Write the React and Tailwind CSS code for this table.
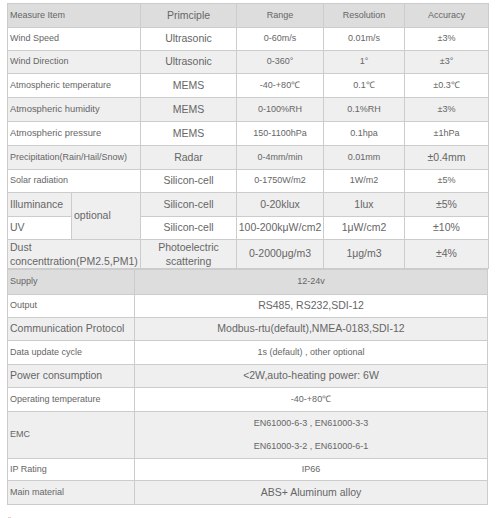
const S = "text-[9px]";
const M = "text-[9.4px]";
const L = "text-[10.5px]";

const rows = [
  { bg: "bg-white", h: "h-[23px]", name: ["Wind Speed", S], cells: [["Ultrasonic", L], ["0-60m/s", S], ["0.01m/s", S], ["±3%", S]] },
  { bg: "bg-[#efefef]", h: "h-[23px]", name: ["Wind Direction", S], cells: [["Ultrasonic", L], ["0-360°", S], ["1°", S], ["±3°", S]] },
  { bg: "bg-white", h: "h-[24px]", name: ["Atmospheric temperature", S], cells: [["MEMS", L], ["-40-+80℃", S], ["0.1℃", S], ["±0.3℃", S]] },
  { bg: "bg-[#efefef]", h: "h-[24px]", name: ["Atmospheric humidity", M], cells: [["MEMS", L], ["0-100%RH", S], ["0.1%RH", S], ["±3%", S]] },
  { bg: "bg-white", h: "h-[24px]", name: ["Atmospheric pressure", M], cells: [["MEMS", L], ["150-1100hPa", S], ["0.1hpa", S], ["±1hPa", S]] },
  { bg: "bg-[#efefef]", h: "h-[24px]", name: ["Precipitation(Rain/Hail/Snow)", S], cells: [["Radar", L], ["0-4mm/min", S], ["0.01mm", S], ["±0.4mm", L]] },
  { bg: "bg-white", h: "h-[23px]", name: ["Solar radiation", S], cells: [["Silicon-cell", L], ["0-1750W/m2", S], ["1W/m2", S], ["±5%", S]] },
];

const specs = [
  { bg: "bg-[#dddddd]", h: "h-[25px]", name: ["Supply", S], value: [["12-24v", S]] },
  { bg: "bg-white", h: "h-[23px]", name: ["Output", S], value: [["RS485, RS232,SDI-12", L]] },
  { bg: "bg-[#efefef]", h: "h-[23px]", name: ["Communication Protocol", L], value: [["Modbus-rtu(default),NMEA-0183,SDI-12", L]] },
  { bg: "bg-white", h: "h-[24px]", name: ["Data update cycle", S], value: [["1s (default) , other optional", S]] },
  { bg: "bg-[#efefef]", h: "h-[23px]", name: ["Power consumption", L], value: [["<2W,auto-heating power: 6W", L]] },
  { bg: "bg-white", h: "h-[24px]", name: ["Operating temperature", S], value: [["-40-+80℃", S]] },
  { bg: "bg-[#efefef]", h: "h-[46px]", name: ["EMC", S], value: [["EN61000-6-3 , EN61000-3-3", S], ["EN61000-3-2 , EN61000-6-1", S]] },
  { bg: "bg-white", h: "h-[22px]", name: ["IP Rating", S], value: [["IP66", S]] },
  { bg: "bg-[#efefef]", h: "h-[24px]", name: ["Main material", S], value: [["ABS+ Aluminum alloy", L]] },
];

const td = "border border-[#cccccc] p-0";

function App() {
  return (
    <div className="min-h-screen bg-white pt-[3px] pl-[7px] text-[#666666]" style={{ fontFamily: '"Liberation Sans", Arial, sans-serif' }}>
      <table className="w-[481px] table-fixed border-collapse">
        <colgroup>
          <col className="w-[64px]" />
          <col className="w-[69px]" />
          <col className="w-[96px]" />
          <col className="w-[87px]" />
          <col className="w-[81px]" />
          <col className="w-[84px]" />
        </colgroup>
        <tbody>
          <tr className="h-[24px] bg-[#dddddd]">
            <td colSpan={2} className={`${td} pl-[2px] ${S}`}>Measure Item</td>
            <td className={`${td} text-center ${L}`}>Primciple</td>
            <td className={`${td} text-center ${S}`}>Range</td>
            <td className={`${td} text-center ${S}`}>Resolution</td>
            <td className={`${td} text-center ${S}`}>Accuracy</td>
          </tr>
          {rows.map((r, i) => (
            <tr key={i} className={`${r.h} ${r.bg}`}>
              <td colSpan={2} className={`${td} pl-[2px] ${r.name[1]}`}>{r.name[0]}</td>
              {r.cells.map((c, j) => (
                <td key={j} className={`${td} text-center ${c[1]}`}>{c[0]}</td>
              ))}
            </tr>
          ))}
          <tr className="h-[24px] bg-[#efefef]">
            <td className={`${td} pl-[2px] ${L}`}>Illuminance</td>
            <td rowSpan={2} className={`${td} bg-[#efefef] pl-[2px] ${L}`}>optional</td>
            <td className={`${td} text-center ${L}`}>Silicon-cell</td>
            <td className={`${td} text-center ${L}`}>0-20klux</td>
            <td className={`${td} text-center ${L}`}>1lux</td>
            <td className={`${td} text-center ${L}`}>±5%</td>
          </tr>
          <tr className="h-[23px] bg-white">
            <td className={`${td} pl-[2px] ${L}`}>UV</td>
            <td className={`${td} text-center ${L}`}>Silicon-cell</td>
            <td className={`${td} text-center ${L}`}>100-200kμW/cm2</td>
            <td className={`${td} text-center ${L}`}>1μW/cm2</td>
            <td className={`${td} text-center ${L}`}>±10%</td>
          </tr>
          <tr className="h-[29px] bg-[#efefef]">
            <td colSpan={2} className={`${td} pl-[2px] leading-[14px] ${L}`}>Dust<br />concenttration(PM2.5,PM1)</td>
            <td className={`${td} text-center leading-[14px] ${L}`}>Photoelectric<br />scattering</td>
            <td className={`${td} text-center ${L}`}>0-2000μg/m3</td>
            <td className={`${td} text-center ${L}`}>1μg/m3</td>
            <td className={`${td} text-center ${L}`}>±4%</td>
          </tr>
        </tbody>
      </table>
      <table className="w-[480px] table-fixed border-collapse">
        <colgroup>
          <col className="w-[127px]" />
          <col className="w-[353px]" />
        </colgroup>
        <tbody>
          {specs.map((r, i) => (
            <tr key={i} className={`${r.h} ${r.bg}`}>
              <td className={`${td} pl-[2px] ${r.name[1]}`}>{r.name[0]}</td>
              <td className={`${td} text-center`}>
                {r.value.map((v, j) => (
                  <div key={j} className={`${v[1]} ${r.value.length > 1 ? "leading-[23px]" : ""}`}>{v[0]}</div>
                ))}
              </td>
            </tr>
          ))}
        </tbody>
      </table>
      <div className="mt-[12px] ml-[1px] h-[3px] w-[3px] bg-[#f2cfcf]" />
    </div>
  );
}

export default App;
